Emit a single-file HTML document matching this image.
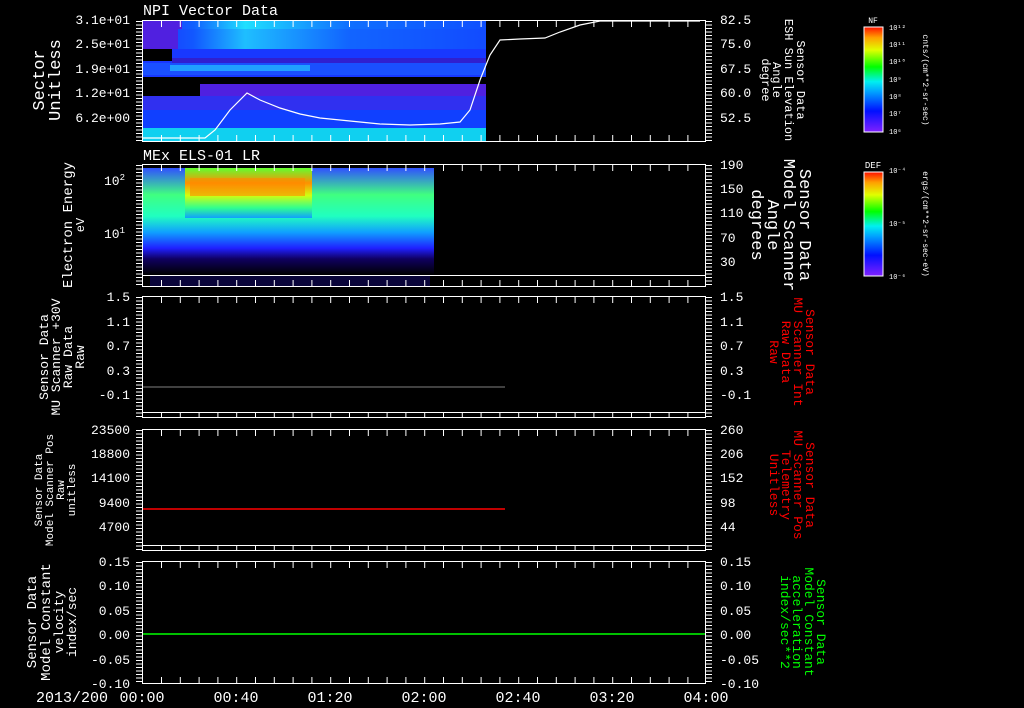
<!DOCTYPE html>
<html><head><meta charset="utf-8"><style>
html,body{margin:0;padding:0;background:#000;width:1024px;height:708px;overflow:hidden}
svg text{font-family:"Liberation Mono","DejaVu Sans Mono",monospace;fill:#fff}
</style></head><body>
<svg width="1024" height="708" viewBox="0 0 1024 708" xmlns="http://www.w3.org/2000/svg">
<defs>
<linearGradient id="rb" x1="0" y1="1" x2="0" y2="0">
<stop offset="0" stop-color="#8020ff"/><stop offset="0.2" stop-color="#0010ff"/><stop offset="0.38" stop-color="#00a0ff"/><stop offset="0.48" stop-color="#00f0f0"/><stop offset="0.62" stop-color="#00ff00"/><stop offset="0.78" stop-color="#e0ff00"/><stop offset="0.9" stop-color="#ffa000"/><stop offset="1" stop-color="#ff1000"/>
</linearGradient>
<linearGradient id="ttop" x1="0" y1="0" x2="1" y2="0">
<stop offset="0" stop-color="#2030ff"/><stop offset="0.15" stop-color="#1060ff"/><stop offset="0.3" stop-color="#20e0ff"/><stop offset="0.6" stop-color="#1070ff"/><stop offset="1" stop-color="#1050ff"/>
</linearGradient>
<linearGradient id="p2" x1="0" y1="0" x2="0" y2="1">
<stop offset="0" stop-color="#3050ff"/><stop offset="0.25" stop-color="#40ff80"/><stop offset="0.45" stop-color="#20ffc0"/><stop offset="0.6" stop-color="#10a0ff"/><stop offset="0.75" stop-color="#2020ff"/><stop offset="0.85" stop-color="#100060"/><stop offset="1" stop-color="#000000"/>
</linearGradient>
<linearGradient id="p2h" x1="0" y1="0" x2="0" y2="1">
<stop offset="0" stop-color="#60ff30"/><stop offset="0.3" stop-color="#ff9000"/><stop offset="0.55" stop-color="#d0ff10"/><stop offset="0.8" stop-color="#30ff90"/><stop offset="1" stop-color="#10a0ff"/>
</linearGradient>
</defs>

<!-- Panel 1 heatmap -->
<rect x="142" y="21" width="344" height="121" fill="#1838ff"/>
<rect x="142" y="21" width="344" height="8" fill="url(#ttop)"/>
<rect x="142" y="29" width="344" height="20" fill="url(#ttop)" opacity="0.8"/>
<rect x="142" y="21" width="40" height="8" fill="#5020e0"/>
<rect x="142" y="29" width="36" height="20" fill="#5020e0"/>
<rect x="142" y="49" width="30" height="12" fill="#000"/>
<rect x="172" y="58" width="314" height="5" fill="#3020d0"/>
<rect x="142" y="63" width="344" height="12" fill="#1a50ff"/>
<rect x="170" y="65" width="140" height="6" fill="#20a0ff"/>
<rect x="142" y="77" width="344" height="8" fill="#000"/>
<rect x="200" y="84" width="286" height="12" fill="#5020e0"/>
<rect x="142" y="84" width="58" height="12" fill="#000"/>
<rect x="142" y="96" width="344" height="14" fill="#3030f0"/>
<rect x="142" y="110" width="344" height="18" fill="#1040ff"/>
<rect x="142" y="128" width="344" height="14" fill="#10d0f0"/>
<polyline fill="none" stroke="#fff" stroke-width="1.2" points="142,138 205,138 215,130 230,110 247,93 260,100 280,108 300,114 320,118 350,121 380,124 410,125 440,124 460,122 470,110 480,80 490,55 500,40 520,39 545,38 560,32 580,25 600,21 700,21"/>

<!-- Panel 2 heatmap -->
<rect x="142" y="168" width="292" height="107" fill="url(#p2)"/>
<rect x="185" y="168" width="127" height="50" fill="url(#p2h)"/>
<rect x="190" y="178" width="115" height="18" fill="#ff8800" opacity="0.6"/>
<rect x="150" y="276" width="280" height="11" fill="#2010c0" opacity="0.3"/>

<!-- Lines -->
<line x1="142" y1="387" x2="505" y2="387" stroke="#808080" stroke-width="1"/>
<line x1="142" y1="509" x2="505" y2="509" stroke="#ff0000" stroke-width="1.5"/>
<line x1="142" y1="634" x2="706" y2="634" stroke="#00ff00" stroke-width="1.5"/>

<g stroke="#fff" fill="none" stroke-width="1">
<rect x="142.5" y="20.5" width="563" height="121"/>
<rect x="142.5" y="164.5" width="563" height="122"/><line x1="142" y1="275.5" x2="706" y2="275.5"/>
<rect x="142.5" y="296.5" width="563" height="121"/><line x1="142" y1="412.5" x2="706" y2="412.5"/>
<rect x="142.5" y="429.5" width="563" height="121"/><line x1="142" y1="545.5" x2="706" y2="545.5"/>
<rect x="142.5" y="561.5" width="563" height="122"/>
</g>
<g stroke="#fff" fill="none">
<line x1="139" y1="21" x2="139" y2="142" stroke-width="6" stroke-dasharray="1 2.5"/>
<line x1="139" y1="165" x2="139" y2="287" stroke-width="6" stroke-dasharray="1 2.5"/>
<line x1="139" y1="297" x2="139" y2="418" stroke-width="6" stroke-dasharray="1 2.5"/>
<line x1="139" y1="430" x2="139" y2="551" stroke-width="6" stroke-dasharray="1 2.5"/>
<line x1="139" y1="562" x2="139" y2="684" stroke-width="6" stroke-dasharray="1 2.5"/>
<line x1="709" y1="21" x2="709" y2="142" stroke-width="6" stroke-dasharray="1 2.5"/>
<line x1="709" y1="165" x2="709" y2="287" stroke-width="6" stroke-dasharray="1 2.5"/>
<line x1="709" y1="297" x2="709" y2="418" stroke-width="6" stroke-dasharray="1 2.5"/>
<line x1="709" y1="430" x2="709" y2="551" stroke-width="6" stroke-dasharray="1 2.5"/>
<line x1="709" y1="562" x2="709" y2="684" stroke-width="6" stroke-dasharray="1 2.5"/>
<line x1="161" y1="24" x2="706" y2="24" stroke-width="6" stroke-dasharray="1 17.8"/>
<line x1="161" y1="138" x2="706" y2="138" stroke-width="6" stroke-dasharray="1 17.8"/>
<line x1="161" y1="168" x2="706" y2="168" stroke-width="6" stroke-dasharray="1 17.8"/>
<line x1="161" y1="283" x2="706" y2="283" stroke-width="6" stroke-dasharray="1 17.8"/>
<line x1="161" y1="300" x2="706" y2="300" stroke-width="6" stroke-dasharray="1 17.8"/>
<line x1="161" y1="415" x2="706" y2="415" stroke-width="6" stroke-dasharray="1 17.8"/>
<line x1="161" y1="433" x2="706" y2="433" stroke-width="6" stroke-dasharray="1 17.8"/>
<line x1="161" y1="548" x2="706" y2="548" stroke-width="6" stroke-dasharray="1 17.8"/>
<line x1="161" y1="565" x2="706" y2="565" stroke-width="6" stroke-dasharray="1 17.8"/>
<line x1="161" y1="680" x2="706" y2="680" stroke-width="6" stroke-dasharray="1 17.8"/>
</g>

<g font-size="13" text-anchor="end">
<text x="130" y="24">3.1e+01</text><text x="130" y="48">2.5e+01</text><text x="130" y="73">1.9e+01</text><text x="130" y="97">1.2e+01</text><text x="130" y="122">6.2e+00</text>
<text x="125" y="185">10<tspan font-size="9" dy="-5">2</tspan></text><text x="125" y="238">10<tspan font-size="9" dy="-5">1</tspan></text>
<text x="130" y="301">1.5</text><text x="130" y="326">1.1</text><text x="130" y="350">0.7</text><text x="130" y="375">0.3</text><text x="130" y="399">-0.1</text>
<text x="130" y="434">23500</text><text x="130" y="458">18800</text><text x="130" y="482">14100</text><text x="130" y="507">9400</text><text x="130" y="531">4700</text>
<text x="130" y="566">0.15</text><text x="130" y="590">0.10</text><text x="130" y="615">0.05</text><text x="130" y="639">0.00</text><text x="130" y="664">-0.05</text><text x="130" y="688">-0.10</text>
</g>
<g font-size="13" text-anchor="start">
<text x="720" y="24">82.5</text><text x="720" y="48">75.0</text><text x="720" y="73">67.5</text><text x="720" y="97">60.0</text><text x="720" y="122">52.5</text>
<text x="720" y="169">190</text><text x="720" y="193">150</text><text x="720" y="217">110</text><text x="720" y="242">70</text><text x="720" y="266">30</text>
<text x="720" y="301">1.5</text><text x="720" y="326">1.1</text><text x="720" y="350">0.7</text><text x="720" y="375">0.3</text><text x="720" y="399">-0.1</text>
<text x="720" y="434">260</text><text x="720" y="458">206</text><text x="720" y="482">152</text><text x="720" y="507">98</text><text x="720" y="531">44</text>
<text x="720" y="566">0.15</text><text x="720" y="590">0.10</text><text x="720" y="615">0.05</text><text x="720" y="639">0.00</text><text x="720" y="664">-0.05</text><text x="720" y="688">-0.10</text>
</g>
<g font-size="15" text-anchor="middle">
<text x="72" y="702">2013/200</text>
<text x="142" y="702">00:00</text><text x="236" y="702">00:40</text><text x="330" y="702">01:20</text><text x="424" y="702">02:00</text><text x="518" y="702">02:40</text><text x="612" y="702">03:20</text><text x="706" y="702">04:00</text>
</g>
<text x="143" y="15" font-size="15">NPI Vector Data</text>
<text x="143" y="160" font-size="15">MEx ELS-01 LR</text>

<g text-anchor="middle">
<text transform="translate(44,80) rotate(-90)" font-size="17">Sector</text>
<text transform="translate(60,80) rotate(-90)" font-size="17">Unitless</text>
<text transform="translate(72,225) rotate(-90)" font-size="14">Electron Energy</text>
<text transform="translate(84,225) rotate(-90)" font-size="12">eV</text>
<text transform="translate(48,357) rotate(-90)" font-size="13">Sensor Data</text>
<text transform="translate(60,357) rotate(-90)" font-size="13">MU Scanner +30V</text>
<text transform="translate(72,357) rotate(-90)" font-size="13">Raw Data</text>
<text transform="translate(84,357) rotate(-90)" font-size="13">Raw</text>
<text transform="translate(42,490) rotate(-90)" font-size="11">Sensor Data</text>
<text transform="translate(53,490) rotate(-90)" font-size="11">Model Scanner Pos</text>
<text transform="translate(64,490) rotate(-90)" font-size="11">Raw</text>
<text transform="translate(75,490) rotate(-90)" font-size="11">unitless</text>
<text transform="translate(36,622) rotate(-90)" font-size="14">Sensor Data</text>
<text transform="translate(50,622) rotate(-90)" font-size="14">Model Constant</text>
<text transform="translate(63,622) rotate(-90)" font-size="13">velocity</text>
<text transform="translate(76,622) rotate(-90)" font-size="13">index/sec</text>
</g>
<g text-anchor="middle">
<text transform="translate(797,80) rotate(90)" font-size="12">Sensor Data</text>
<text transform="translate(785,80) rotate(90)" font-size="12">ESH Sun Elevation</text>
<text transform="translate(773,80) rotate(90)" font-size="12">Angle</text>
<text transform="translate(762,80) rotate(90)" font-size="12">degree</text>
<text transform="translate(800,225) rotate(90)" font-size="17">Sensor Data</text>
<text transform="translate(784,225) rotate(90)" font-size="17">Model Scanner</text>
<text transform="translate(768,225) rotate(90)" font-size="17">Angle</text>
<text transform="translate(752,225) rotate(90)" font-size="17">degrees</text>
<text transform="translate(806,352) rotate(90)" font-size="13" style="fill:#ff0000">Sensor Data</text>
<text transform="translate(794,352) rotate(90)" font-size="13" style="fill:#ff0000">MU Scanner Int</text>
<text transform="translate(782,352) rotate(90)" font-size="13" style="fill:#ff0000">Raw Data</text>
<text transform="translate(770,352) rotate(90)" font-size="13" style="fill:#ff0000">Raw</text>
<text transform="translate(806,485) rotate(90)" font-size="13" style="fill:#ff0000">Sensor Data</text>
<text transform="translate(794,485) rotate(90)" font-size="13" style="fill:#ff0000">MU Scanner Pos</text>
<text transform="translate(782,485) rotate(90)" font-size="13" style="fill:#ff0000">Telemetry</text>
<text transform="translate(770,485) rotate(90)" font-size="13" style="fill:#ff0000">Unitless</text>
<text transform="translate(817,622) rotate(90)" font-size="13" style="fill:#00ff00">Sensor Data</text>
<text transform="translate(805,622) rotate(90)" font-size="13" style="fill:#00ff00">Model Constant</text>
<text transform="translate(793,622) rotate(90)" font-size="13" style="fill:#00ff00">acceleration</text>
<text transform="translate(781,622) rotate(90)" font-size="13" style="fill:#00ff00">index/sec**2</text>
</g>

<rect x="864" y="27" width="19" height="105" fill="url(#rb)" stroke="#fff" stroke-width="1"/>
<text x="873" y="23" font-size="8" text-anchor="middle">NF</text>
<g font-size="7"><text x="889" y="30">10¹²</text><text x="889" y="47">10¹¹</text><text x="889" y="64">10¹⁰</text><text x="889" y="82">10⁹</text><text x="889" y="99">10⁸</text><text x="889" y="116">10⁷</text><text x="889" y="134">10⁶</text></g>
<text transform="translate(923,80) rotate(90)" font-size="8" text-anchor="middle">cnts/(cm**2-sr-sec)</text>
<rect x="864" y="172" width="19" height="104" fill="url(#rb)" stroke="#fff" stroke-width="1"/>
<text x="873" y="168" font-size="9" text-anchor="middle">DEF</text>
<g font-size="7"><text x="889" y="173">10⁻⁴</text><text x="889" y="226">10⁻⁵</text><text x="889" y="279">10⁻⁶</text></g>
<text transform="translate(923,224) rotate(90)" font-size="8" text-anchor="middle">ergs/(cm**2-sr-sec-eV)</text>
</svg>
</body></html>
